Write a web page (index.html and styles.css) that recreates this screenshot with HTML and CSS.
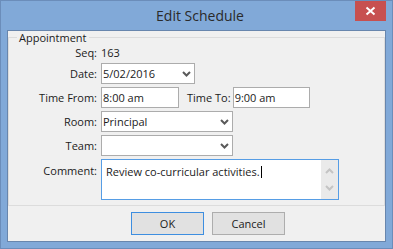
FILE: index.html
```
<!DOCTYPE html>
<html>
<head>
<meta charset="utf-8">
<link rel="stylesheet" href="styles.css">
</head>
<body>
<div class="window">
  <div class="titlebar">
    <div class="title">Edit Schedule</div>
    <div class="close">
      <svg width="31" height="20" viewBox="0 0 31 20"><path d="M11.5 6.5 L19.5 13.5 M19.5 6.5 L11.5 13.5" stroke="#fff" stroke-width="2" fill="none"/></svg>
    </div>
  </div>
  <div class="client">
    <fieldset class="group">
      <legend class="legend">Appointment</legend>
      <div class="form">
        <div class="lbl">Seq:</div>
        <div class="val">163</div>

        <div class="lbl">Date:</div>
        <div class="field select date"><span>5/02/2016</span><svg class="chev" width="9" height="6" viewBox="0 0 9 6"><path d="M1 1 L4.5 4.5 L8 1" stroke="#5a5a5a" stroke-width="2" fill="none"/></svg></div>

        <div class="lbl">Time From:</div>
        <div class="row">
          <div class="field time-from">8:00 am</div>
          <div class="lbl inline">Time To:</div>
          <div class="field time-to">9:00 am</div>
        </div>

        <div class="lbl">Room:</div>
        <div class="field select wide"><span>Principal</span><svg class="chev" width="9" height="6" viewBox="0 0 9 6"><path d="M1 1 L4.5 4.5 L8 1" stroke="#5a5a5a" stroke-width="2" fill="none"/></svg></div>

        <div class="lbl">Team:</div>
        <div class="field select wide"><span></span><svg class="chev" width="9" height="6" viewBox="0 0 9 6"><path d="M1 1 L4.5 4.5 L8 1" stroke="#5a5a5a" stroke-width="2" fill="none"/></svg></div>

        <div class="lbl top">Comment:</div>
        <div class="textarea">
          <div class="text">Review co-curricular activities.<span class="caret"></span></div>
          <div class="scrollbar">
            <svg width="9" height="6" viewBox="0 0 9 6"><path d="M1 5 L4.5 1.5 L8 5" stroke="#c4c4c4" stroke-width="2" fill="none"/></svg>
            <svg width="9" height="6" viewBox="0 0 9 6"><path d="M1 1 L4.5 4.5 L8 1" stroke="#c4c4c4" stroke-width="2" fill="none"/></svg>
          </div>
        </div>
      </div>
    </fieldset>
    <div class="buttons">
      <div class="btn default">OK</div>
      <div class="btn">Cancel</div>
    </div>
  </div>
</div>
</body>
</html>
```
FILE: styles.css
```
html, body {
  margin: 0;
  padding: 0;
  background: #ffffff;
}
body {
  font-family: "Open Sans", "Noto Sans", sans-serif;
  font-size: 11px;
  color: #1b1b1b;
}
.window {
  width: 393px;
  height: 249px;
  box-sizing: border-box;
  border: 1px solid #6b8dba;
  background: #81a9d8;
  display: flex;
  flex-direction: column;
}
.titlebar {
  height: 29px;
  display: flex;
  align-items: flex-start;
}
.title {
  flex: 1;
  text-align: center;
  font-size: 14px;
  line-height: 20px;
  padding-top: 5px;
  padding-left: 44px;
  color: #2a2a2a;
}
.close {
  width: 31px;
  height: 20px;
  background: #c75050;
  margin-right: 6px;
  display: flex;
}
.client {
  margin: 0 6px 6px 6px;
  flex: 1;
  border: 1px solid #6886ad;
  background: #f0f0f0;
  display: flex;
  flex-direction: column;
}
.group {
  margin: 0;
  padding: 0 0 5px 0;
  border: 1px solid #dcdcdc;
  min-width: 0;
}
.legend {
  margin-left: 8px;
  padding: 0 2px;
  line-height: 13px;
  font-size: 11px;
  color: #1b1b1b;
}
.form {
  display: grid;
  grid-template-columns: 88px 1fr;
  grid-template-rows: 16px 21px 21px 21px 21px 41px;
  gap: 3px 4px;
}
.lbl {
  text-align: right;
  line-height: 21px;
  white-space: nowrap;
}
.lbl.top {
  line-height: 15px;
  padding-top: 4px;
}
.form > .lbl:first-child,
.val {
  line-height: 16px;
  padding-top: 1px;
}
.field {
  box-sizing: border-box;
  height: 21px;
  border: 1px solid #acacac;
  background: #ffffff;
  line-height: 19px;
  padding-left: 1px;
  white-space: nowrap;
}
.select {
  display: flex;
  align-items: center;
  justify-content: space-between;
  padding-right: 3px;
  line-height: 19px;
}
.chev {
  display: block;
  margin-top: 1px;
}
.date {
  width: 94px;
}
.wide {
  width: 132px;
}
.row {
  display: flex;
  align-items: center;
}
.time-from {
  width: 78px;
}
.lbl.inline {
  margin-left: 8px;
  margin-right: 2px;
}
.time-to {
  width: 77px;
}
.textarea {
  box-sizing: border-box;
  width: 238px;
  height: 41px;
  border: 1px solid #569de5;
  background: #ffffff;
  display: flex;
}
.text {
  flex: 1;
  padding: 4px 0 0 4px;
  line-height: 15px;
}
.caret {
  display: inline-block;
  width: 1px;
  height: 12px;
  background: #000;
  vertical-align: -2px;
  margin-left: 1px;
}
.scrollbar {
  width: 17px;
  background: #eaeaea;
  display: flex;
  flex-direction: column;
  align-items: center;
  justify-content: space-between;
  padding: 8px 0 8px 0;
}
.scrollbar svg {
  display: block;
}
.buttons {
  display: flex;
  gap: 8px;
  padding: 6px 0 0 123px;
}
.btn {
  box-sizing: border-box;
  width: 73px;
  height: 23px;
  border: 1px solid #adadad;
  background: #e1e1e1;
  text-align: center;
  line-height: 21px;
  color: #1b1b1b;
}
.btn.default {
  border-color: #3d8ee0;
}
```
